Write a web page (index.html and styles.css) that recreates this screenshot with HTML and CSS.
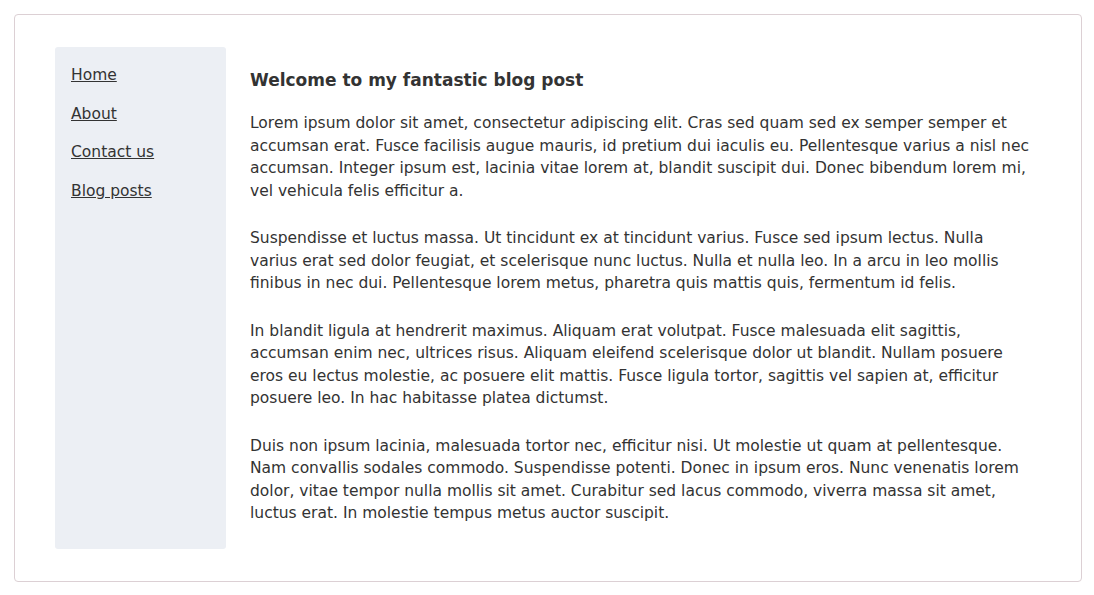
FILE: index.html
```html
<!DOCTYPE html>
<html lang="en">
<head>
<meta charset="utf-8">
<title>Blog post</title>
<link rel="stylesheet" href="styles.css">
</head>
<body>
<div class="page">
  <nav class="sidebar">
    <a href="#">Home</a>
    <a href="#">About</a>
    <a href="#">Contact us</a>
    <a href="#">Blog posts</a>
  </nav>
  <main class="content">
    <h1>Welcome to my fantastic blog post</h1>
    <p>Lorem ipsum dolor sit amet, consectetur adipiscing elit. Cras sed quam sed ex semper semper et accumsan erat. Fusce facilisis augue mauris, id pretium dui iaculis eu. Pellentesque varius a nisl nec accumsan. Integer ipsum est, lacinia vitae lorem at, blandit suscipit dui. Donec bibendum lorem mi, vel vehicula felis efficitur a.</p>
    <p>Suspendisse et luctus massa. Ut tincidunt ex at tincidunt varius. Fusce sed ipsum lectus. Nulla varius erat sed dolor feugiat, et scelerisque nunc luctus. Nulla et nulla leo. In a arcu in leo mollis finibus in nec dui. Pellentesque lorem metus, pharetra quis mattis quis, fermentum id felis.</p>
    <p>In blandit ligula at hendrerit maximus. Aliquam erat volutpat. Fusce malesuada elit sagittis, accumsan enim nec, ultrices risus. Aliquam eleifend scelerisque dolor ut blandit. Nullam posuere eros eu lectus molestie, ac posuere elit mattis. Fusce ligula tortor, sagittis vel sapien at, efficitur posuere leo. In hac habitasse platea dictumst.</p>
    <p>Duis non ipsum lacinia, malesuada tortor nec, efficitur nisi. Ut molestie ut quam at pellentesque. Nam convallis sodales commodo. Suspendisse potenti. Donec in ipsum eros. Nunc venenatis lorem dolor, vitae tempor nulla mollis sit amet. Curabitur sed lacus commodo, viverra massa sit amet, luctus erat. In molestie tempus metus auctor suscipit.</p>
  </main>
</div>
</body>
</html>
```
FILE: styles.css
```css
html, body {
  margin: 0;
  background: #ffffff;
}
body {
  padding: 14px 12px 14px 14px;
  font-family: "DejaVu Sans", "Liberation Sans", sans-serif;
  font-size: 15.5px;
  color: #333333;
}
.page {
  display: flex;
  gap: 24px;
  padding: 32px 40px;
  border: 1px solid #dcd0d4;
  border-radius: 4px;
}
.sidebar {
  flex: 0 0 171px;
  box-sizing: border-box;
  padding: 17px 16px 16px;
  background: #eceff4;
  border-radius: 3px;
  display: flex;
  flex-direction: column;
  align-items: flex-start;
  gap: 16px;
}
.sidebar a {
  color: #333333;
  text-decoration: underline;
  line-height: 22.5px;
}
.content {
  flex: 1;
  min-width: 0;
  padding-right: 10px;
}
.content h1 {
  margin: 21px 0 20px;
  font-size: 17px;
  line-height: 24px;
  font-weight: bold;
}
.content p {
  margin: 0 0 25px;
  line-height: 22.5px;
}
.content p:last-child {
  margin-bottom: 24px;
}
```
